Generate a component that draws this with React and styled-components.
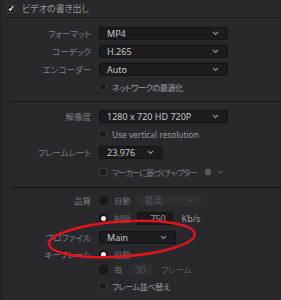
import React from "react";
import styled, { createGlobalStyle } from "styled-components";

const Global = createGlobalStyle`
  html, body { margin: 0; padding: 0; background: #28282d; }
  body {
    font-family: "Noto Sans", "Noto Sans CJK JP", sans-serif;
    font-feature-settings: "palt";
  }
`;

const Panel = styled.div`
  position: relative;
  width: 281px;
  height: 300px;
  overflow: hidden;
  background: #28282d;
  border-left: 1px solid #212125;
  box-sizing: border-box;
`;

const Header = styled.div`
  display: flex;
  align-items: center;
  gap: 7px;
  height: 17px;
  padding-left: 6px;
  font-size: 9px;
  color: #9a9a9e;
`;

const Section = styled.div`
  border-top: 1px solid #17171a;
  margin-left: ${(p) => p.$indent || 6}px;
  padding: ${(p) => p.$pad || "5px 0 4px"};
`;

const Row = styled.div`
  display: grid;
  grid-template-columns: ${(p) => p.$col || 84}px 1fr;
  column-gap: 8px;
  align-items: center;
  height: ${(p) => p.$h || 18}px;
  margin-top: ${(p) => p.$mt || 0}px;
`;

const Label = styled.div`
  text-align: right;
  font-size: 8.5px;
  color: #7e7e82;
  white-space: nowrap;
`;

const Control = styled.div`
  display: flex;
  align-items: center;
  gap: ${(p) => p.$gap || 6}px;
  font-size: 9px;
  color: #9c9ca0;
  white-space: nowrap;
`;

const CheckText = styled.span`
  font-size: ${(p) => (p.$latin ? 8.3 : 8.3)}px;
  letter-spacing: ${(p) => (p.$ls !== undefined ? p.$ls : p.$latin ? 0 : -0.6)}px;
  color: ${(p) => p.$c || "#9c9ca0"};
  margin-left: -1px;
`;

const Select = styled.div`
  display: flex;
  align-items: center;
  justify-content: space-between;
  box-sizing: border-box;
  width: ${(p) => p.$w}px;
  height: 13px;
  padding: 0 8px 0 7px;
  background: ${(p) => (p.$off ? "#2e2e33" : "#1c1c1f")};
  border: 1px solid ${(p) => (p.$off ? "#2a2a2e" : "#141416")};
  border-radius: 2px;
  font-size: 9px;
  color: ${(p) => (p.$off ? "#55555a" : "#c6c6ca")};
`;

const Field = styled.div`
  box-sizing: border-box;
  width: ${(p) => p.$w}px;
  height: 13px;
  padding: ${(p) => (p.$center ? "0" : "0 6px 0 0")};
  text-align: ${(p) => (p.$center ? "center" : "right")};
  line-height: 11px;
  background: ${(p) => (p.$off ? "#2e2e33" : "#1a1a1d")};
  border: 1px solid ${(p) => (p.$off ? "#2a2a2e" : "#141416")};
  border-radius: 2px;
  font-size: 9px;
  color: ${(p) => (p.$off ? "#55555a" : "#9a9a9e")};
`;

const Box = styled.span`
  display: inline-flex;
  align-items: center;
  justify-content: center;
  box-sizing: border-box;
  width: 8px;
  height: 8px;
  background: #1c1c1f;
  border: 1px solid #3a3a3f;
  border-radius: 1px;
  flex-shrink: 0;
`;

const Radio = styled.span`
  position: relative;
  box-sizing: border-box;
  width: 9px;
  height: 9px;
  border-radius: 50%;
  background: #1a1a1d;
  border: 1px solid #121214;
  flex-shrink: 0;
  &::after {
    content: "";
    display: ${(p) => (p.$on ? "block" : "none")};
    position: absolute;
    left: 1px;
    top: 1px;
    width: 5px;
    height: 5px;
    border-radius: 50%;
    background: #f2f2f2;
  }
`;

const Dim = styled.span`
  color: ${(p) => p.$c || "#6e6e72"};
  margin-left: ${(p) => p.$ml || 0}px;
  font-size: ${(p) => p.$fs || 9}px;
`;

const Overlay = styled.svg`
  position: absolute;
  left: 0;
  top: 0;
  pointer-events: none;
`;

const Chevron = ({ c = "#8a8a8e" }) => (
  <svg width="7" height="5" viewBox="0 0 7 5">
    <path d="M1 1l2.5 2.5L6 1" fill="none" stroke={c} strokeWidth="1.2" />
  </svg>
);

const Check = () => (
  <svg width="7" height="7" viewBox="0 0 8 8">
    <path d="M1.3 4.3l1.8 2L6.8 1" fill="none" stroke="#f4f4f4" strokeWidth="1.7" />
  </svg>
);

const Flag = () => (
  <svg width="6" height="7" viewBox="0 0 6 7">
    <path d="M0 0h6v5L3 7 0 5z" fill="#58585c" />
  </svg>
);

const App = () => {
  return (
    <>
      <Global />
      <Panel>
        <Header>
          <Box>
            <Check />
          </Box>
          ビデオの書き出し
        </Header>

        <Section $pad="6px 0 5px">
          <Row>
            <Label>フォーマット</Label>
            <Select $w={129}>
              MP4 <Chevron />
            </Select>
          </Row>
          <Row>
            <Label>コーデック</Label>
            <Select $w={129}>
              H.265 <Chevron />
            </Select>
          </Row>
          <Row>
            <Label>エンコーダー</Label>
            <Select $w={129}>
              Auto <Chevron />
            </Select>
          </Row>
          <Row>
            <span />
            <Control>
              <Box />
              <CheckText>ネットワークの最適化</CheckText>
            </Control>
          </Row>
        </Section>

        <Section $indent={9} $pad="5px 0 6px">
          <Row $col={81}>
            <Label>解像度</Label>
            <Select $w={129}>
              1280 x 720 HD 720P <Chevron />
            </Select>
          </Row>
          <Row $col={81}>
            <span />
            <Control>
              <Box />
              <CheckText $latin>Use vertical resolution</CheckText>
            </Control>
          </Row>
          <Row $col={81}>
            <Label>フレームレート</Label>
            <Select $w={64}>
              23.976 <Chevron />
            </Select>
          </Row>
          <Row $col={81} $mt={2}>
            <span />
            <Control>
              <Box />
              <CheckText $c="#7a7a7e" $ls={-1.1}>
                マーカーに基づくチャプター
              </CheckText>
              <Dim $ml={3}>
                <Flag />
              </Dim>
              <Chevron c="#4e4e52" />
            </Control>
          </Row>
        </Section>

        <Section $indent={9} $pad="3px 0 0">
          <Row $col={81}>
            <Label>品質</Label>
            <Control>
              <Radio /> <Dim $fs={8.3}>自動</Dim>
              <Select $w={65} $off>
                最高 <Chevron c="#4a4a4e" />
              </Select>
            </Control>
          </Row>
          <Row $col={81}>
            <span />
            <Control>
              <Radio $on /> <Dim $fs={8.3}>制限</Dim>
              <Field $w={36}>750</Field>
              <Dim $c="#9c9ca0" $ml={3}>
                Kb/s
              </Dim>
            </Control>
          </Row>
          <Row $col={81} $mt={1}>
            <Label>プロファイル</Label>
            <Select $w={77}>
              Main <Chevron />
            </Select>
          </Row>
          <Row $col={81} $h={16}>
            <Label>キーフレーム</Label>
            <Control>
              <Radio $on /> <Dim $fs={8.3}>自動</Dim>
            </Control>
          </Row>
          <Row $col={81} $h={14}>
            <span />
            <Control>
              <Radio /> <Dim $fs={8.3}>毎</Dim>
              <Field $w={25} $off $center>
                30
              </Field>
              <Dim $c="#5e5e62" $ml={2} $fs={8.3}>
                フレーム
              </Dim>
            </Control>
          </Row>
          <Row $col={81} $h={16} $mt={2}>
            <span />
            <Control>
              <Box />
              <CheckText>フレーム並べ替え</CheckText>
            </Control>
          </Row>
        </Section>

        <Overlay width="281" height="300">
          <ellipse
            cx="121"
            cy="239"
            rx="73"
            ry="17.5"
            transform="rotate(-4 121 239)"
            fill="none"
            stroke="#e3141b"
            strokeWidth="2.4"
          />
        </Overlay>
      </Panel>
    </>
  );
};

export default App;
